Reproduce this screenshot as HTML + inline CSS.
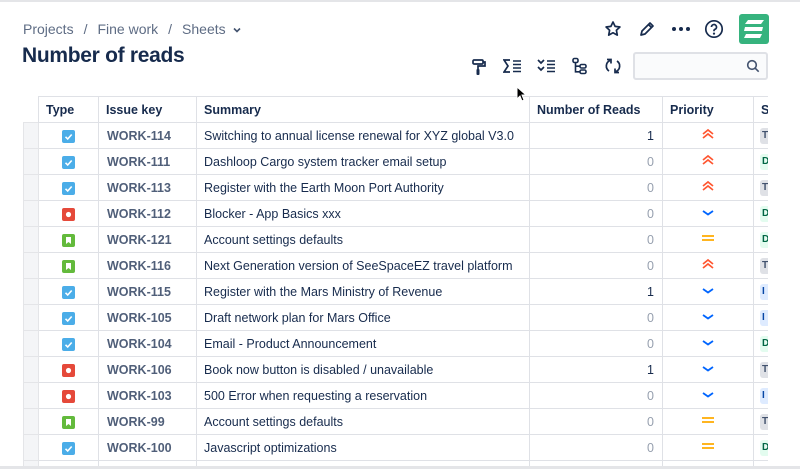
<!DOCTYPE html>
<html><head><meta charset="utf-8"><style>
*{margin:0;padding:0;box-sizing:border-box}
body{width:800px;height:469px;overflow:hidden;background:#fff;font-family:"Liberation Sans",sans-serif;color:#172b4d;position:relative}
.top{position:absolute;left:0;top:0;width:800px;height:2px;background:#e4e5e8}
.bc{position:absolute;left:23px;top:21px;font-size:14px;color:#5e6c84}
.bc span{margin:0 10px}
h1{position:absolute;left:22px;top:44px;font-size:21px;font-weight:bold;color:#172b4d;letter-spacing:-0.3px}
.ico{position:absolute}
.search{position:absolute;left:633px;top:52px;width:135px;height:28px;border:2px solid #dfe1e6;border-radius:3px;background:#fafbfc}
.wrap{position:absolute;left:23px;top:96px;width:745px;height:373px;overflow:hidden}
table{border-collapse:collapse;table-layout:fixed;width:770px;font-size:12.5px}
td,th{border:1px solid #dfe1e6;height:26px;white-space:nowrap;overflow:hidden}
th{text-align:left;font-weight:bold;padding-left:7px;color:#172b4d;font-size:12.5px}
th.g{border:none;border-right:1px solid #dfe1e6}
td.g{background:#f4f5f7;border-color:#e4e5e8}
td.t{text-align:center}
td.k{color:#505f79;padding-left:8px;font-weight:bold}
td.s{padding-left:7px}
td.n{text-align:right;padding-right:8px;color:#97a0af}
td.n.one{color:#172b4d}
td.p{text-align:center}
td.st{padding-left:6px}
.ty{display:inline-block;width:13px;height:13px;border-radius:2px;vertical-align:middle;position:relative}
.ty svg{position:absolute;left:0;top:0}
.task{background:#4bade8}
.bug{background:#e5493a}
.story{background:#63ba3c}
.tag{display:inline-block;width:14px;height:16px;border-radius:3px;font-size:10px;font-weight:bold;font-style:normal;line-height:16px;padding-left:2px;vertical-align:middle}
.T{background:#dfe1e6;color:#42526e}.D{background:#e3fcef;color:#006644}.I{background:#deebff;color:#0747a6}
.fade{position:absolute;left:768px;top:90px;width:32px;height:379px;background:#fff}
.bot{position:absolute;left:0;top:466px;width:800px;height:3px;background:#e4e5e8}
</style></head><body>
<div class="top"></div>
<div class="bc">Projects<span>/</span>Fine work<span>/</span>Sheets <svg width="10" height="8" viewBox="0 0 10 8" style="margin-left:2px"><path d="M2 2.5l3 3 3-3" stroke="#42526e" stroke-width="1.6" fill="none"/></svg></div>
<h1>Number of reads</h1>
<svg class="ico" style="left:604px;top:20px" width="18" height="18" viewBox="0 0 18 18"><path d="M9 2l2.1 4.4 4.8.6-3.5 3.3.9 4.8L9 12.8l-4.3 2.3.9-4.8L2.1 7l4.8-.6z" fill="none" stroke="#172b4d" stroke-width="1.7" stroke-linejoin="round"/></svg>
<svg class="ico" style="left:638px;top:20px" width="18" height="18" viewBox="0 0 18 18"><path d="M3 15l1-4 8-8 3 3-8 8z M10.5 4.5l3 3" fill="none" stroke="#172b4d" stroke-width="1.7" stroke-linejoin="round"/></svg>
<svg class="ico" style="left:671px;top:25px" width="20" height="8"><circle cx="3" cy="4" r="2" fill="#172b4d"/><circle cx="10" cy="4" r="2" fill="#172b4d"/><circle cx="17" cy="4" r="2" fill="#172b4d"/></svg>
<svg class="ico" style="left:704px;top:19px" width="20" height="20" viewBox="0 0 20 20"><circle cx="10" cy="10" r="8.2" fill="none" stroke="#172b4d" stroke-width="1.7"/><path d="M7.5 8a2.5 2.5 0 1 1 3.5 2.3c-.7.3-1 .8-1 1.5v.5" fill="none" stroke="#172b4d" stroke-width="1.7"/><circle cx="10" cy="14.6" r="1.1" fill="#172b4d"/></svg>
<svg class="ico" style="left:739px;top:14px" width="30" height="30" viewBox="0 0 30 30"><rect width="30" height="30" rx="3" fill="#36b37e"/><path d="M9 6h16l-3 4H6z M6 13h18l-1 4H5z M7 20h16l-2 4H5z" fill="#fff"/></svg>
<svg class="ico" style="left:471px;top:58px" width="16" height="18" viewBox="0 0 16 18"><rect x="2" y="2" width="10" height="4" rx="1" fill="none" stroke="#172b4d" stroke-width="1.7"/><path d="M12 4h2v4H7v3" fill="none" stroke="#172b4d" stroke-width="1.7"/><rect x="5.5" y="11" width="3" height="6" rx="1" fill="#172b4d"/></svg>
<svg class="ico" style="left:503px;top:58px" width="20" height="16" viewBox="0 0 20 16"><path d="M7 2H1l4 6-4 6h6" fill="none" stroke="#172b4d" stroke-width="1.7"/><path d="M10 3h8M10 6.5h8M10 10h8M10 13.5h8" stroke="#172b4d" stroke-width="1.5"/></svg>
<svg class="ico" style="left:537px;top:58px" width="20" height="16" viewBox="0 0 20 16"><path d="M1 2l3 3 3-3M1 9l3 3 3-3" fill="none" stroke="#172b4d" stroke-width="1.7"/><path d="M10 3h8M10 6.5h8M10 10h8M10 13.5h8" stroke="#172b4d" stroke-width="1.5"/></svg>
<svg class="ico" style="left:571px;top:57px" width="18" height="18" viewBox="0 0 18 18"><rect x="2" y="1.5" width="5" height="4" rx="1.5" fill="none" stroke="#172b4d" stroke-width="1.6"/><rect x="9" y="7.5" width="6" height="3.5" rx="1.5" fill="none" stroke="#172b4d" stroke-width="1.6"/><rect x="9" y="13" width="6" height="3.5" rx="1.5" fill="none" stroke="#172b4d" stroke-width="1.6"/><path d="M4.5 5.5v9.3H9M4.5 9.2H9" fill="none" stroke="#172b4d" stroke-width="1.6"/></svg>
<svg class="ico" style="left:604px;top:57px" width="18" height="18" viewBox="0 0 18 18"><path d="M6 3.5A6 6 0 0 0 5 14M12 14.5A6 6 0 0 0 13 4M3 2.5h4v4M15 15.5h-4v-4" fill="none" stroke="#172b4d" stroke-width="1.7"/></svg>
<div class="search"><svg style="position:absolute;right:6px;top:5px" width="14" height="14" viewBox="0 0 14 14"><circle cx="6" cy="6" r="4.3" fill="none" stroke="#42526e" stroke-width="1.6"/><path d="M9.2 9.2l3.5 3.5" stroke="#42526e" stroke-width="1.6"/></svg></div>
<svg width="0" height="0" style="position:absolute"><defs>
<g id="ck"><path d="M3.5 6.8l2.2 2.2 4-4.5" stroke="#fff" stroke-width="1.6" fill="none"/></g>
<g id="dt"><circle cx="6.5" cy="6.5" r="2.6" fill="#fff"/></g>
<g id="bm"><path d="M4 3h5v7l-2.5-2L4 10z" fill="#fff"/></g>
</defs></svg>
<div class="wrap"><table>
<colgroup><col style="width:15px"><col style="width:60px"><col style="width:98px"><col style="width:333px"><col style="width:133px"><col style="width:91px"><col style="width:40px"></colgroup>
<tr><th class="g"></th><th>Type</th><th>Issue key</th><th>Summary</th><th>Number of Reads</th><th>Priority</th><th>Status</th></tr>
<tr><td class="g"></td><td class="t"><i class="ty task"><svg width="13" height="13"><use href="#ck"/></svg></i></td><td class="k">WORK-114</td><td class="s">Switching to annual license renewal for XYZ global V3.0</td><td class="n one">1</td><td class="p"><svg width="14" height="12"><path d="M2 6l5-4 5 4M2 10l5-4 5 4" stroke="#ff5630" stroke-width="1.7" fill="none"/></svg></td><td class="st"><i class="tag T">T</i></td></tr>
<tr><td class="g"></td><td class="t"><i class="ty task"><svg width="13" height="13"><use href="#ck"/></svg></i></td><td class="k">WORK-111</td><td class="s">Dashloop Cargo system tracker email setup</td><td class="n">0</td><td class="p"><svg width="14" height="12"><path d="M2 6l5-4 5 4M2 10l5-4 5 4" stroke="#ff5630" stroke-width="1.7" fill="none"/></svg></td><td class="st"><i class="tag D">D</i></td></tr>
<tr><td class="g"></td><td class="t"><i class="ty task"><svg width="13" height="13"><use href="#ck"/></svg></i></td><td class="k">WORK-113</td><td class="s">Register with the Earth Moon Port Authority</td><td class="n">0</td><td class="p"><svg width="14" height="12"><path d="M2 6l5-4 5 4M2 10l5-4 5 4" stroke="#ff5630" stroke-width="1.7" fill="none"/></svg></td><td class="st"><i class="tag T">T</i></td></tr>
<tr><td class="g"></td><td class="t"><i class="ty bug"><svg width="13" height="13"><use href="#dt"/></svg></i></td><td class="k">WORK-112</td><td class="s">Blocker - App Basics xxx</td><td class="n">0</td><td class="p"><svg width="14" height="12"><path d="M2 5l5 3.5 5-3.5" stroke="#0065ff" stroke-width="1.8" fill="none"/></svg></td><td class="st"><i class="tag D">D</i></td></tr>
<tr><td class="g"></td><td class="t"><i class="ty story"><svg width="13" height="13"><use href="#bm"/></svg></i></td><td class="k">WORK-121</td><td class="s">Account settings defaults</td><td class="n">0</td><td class="p"><svg width="14" height="12"><path d="M1 4h12M1 8h12" stroke="#ffab00" stroke-width="1.8"/></svg></td><td class="st"><i class="tag D">D</i></td></tr>
<tr><td class="g"></td><td class="t"><i class="ty story"><svg width="13" height="13"><use href="#bm"/></svg></i></td><td class="k">WORK-116</td><td class="s">Next Generation version of SeeSpaceEZ travel platform</td><td class="n">0</td><td class="p"><svg width="14" height="12"><path d="M2 6l5-4 5 4M2 10l5-4 5 4" stroke="#ff5630" stroke-width="1.7" fill="none"/></svg></td><td class="st"><i class="tag T">T</i></td></tr>
<tr><td class="g"></td><td class="t"><i class="ty task"><svg width="13" height="13"><use href="#ck"/></svg></i></td><td class="k">WORK-115</td><td class="s">Register with the Mars Ministry of Revenue</td><td class="n one">1</td><td class="p"><svg width="14" height="12"><path d="M2 5l5 3.5 5-3.5" stroke="#0065ff" stroke-width="1.8" fill="none"/></svg></td><td class="st"><i class="tag I">I</i></td></tr>
<tr><td class="g"></td><td class="t"><i class="ty task"><svg width="13" height="13"><use href="#ck"/></svg></i></td><td class="k">WORK-105</td><td class="s">Draft network plan for Mars Office</td><td class="n">0</td><td class="p"><svg width="14" height="12"><path d="M2 5l5 3.5 5-3.5" stroke="#0065ff" stroke-width="1.8" fill="none"/></svg></td><td class="st"><i class="tag I">I</i></td></tr>
<tr><td class="g"></td><td class="t"><i class="ty task"><svg width="13" height="13"><use href="#ck"/></svg></i></td><td class="k">WORK-104</td><td class="s">Email - Product Announcement</td><td class="n">0</td><td class="p"><svg width="14" height="12"><path d="M2 5l5 3.5 5-3.5" stroke="#0065ff" stroke-width="1.8" fill="none"/></svg></td><td class="st"><i class="tag D">D</i></td></tr>
<tr><td class="g"></td><td class="t"><i class="ty bug"><svg width="13" height="13"><use href="#dt"/></svg></i></td><td class="k">WORK-106</td><td class="s">Book now button is disabled / unavailable</td><td class="n one">1</td><td class="p"><svg width="14" height="12"><path d="M2 5l5 3.5 5-3.5" stroke="#0065ff" stroke-width="1.8" fill="none"/></svg></td><td class="st"><i class="tag T">T</i></td></tr>
<tr><td class="g"></td><td class="t"><i class="ty bug"><svg width="13" height="13"><use href="#dt"/></svg></i></td><td class="k">WORK-103</td><td class="s">500 Error when requesting a reservation</td><td class="n">0</td><td class="p"><svg width="14" height="12"><path d="M2 5l5 3.5 5-3.5" stroke="#0065ff" stroke-width="1.8" fill="none"/></svg></td><td class="st"><i class="tag I">I</i></td></tr>
<tr><td class="g"></td><td class="t"><i class="ty story"><svg width="13" height="13"><use href="#bm"/></svg></i></td><td class="k">WORK-99</td><td class="s">Account settings defaults</td><td class="n">0</td><td class="p"><svg width="14" height="12"><path d="M1 4h12M1 8h12" stroke="#ffab00" stroke-width="1.8"/></svg></td><td class="st"><i class="tag T">T</i></td></tr>
<tr><td class="g"></td><td class="t"><i class="ty task"><svg width="13" height="13"><use href="#ck"/></svg></i></td><td class="k">WORK-100</td><td class="s">Javascript optimizations</td><td class="n">0</td><td class="p"><svg width="14" height="12"><path d="M1 4h12M1 8h12" stroke="#ffab00" stroke-width="1.8"/></svg></td><td class="st"><i class="tag D">D</i></td></tr>
<tr><td class="g"></td><td class="t"><i class="ty story"></i></td><td class="k"></td><td class="s"></td><td class="n"></td><td class="p"></td><td class="st"></td></tr>
</table></div>
<div class="fade"></div>
<svg class="ico" style="left:516px;top:86px" width="12" height="16" viewBox="0 0 12 16"><path d="M1 1v12l3-3 2 5 2-1-2-5h4z" fill="#000" stroke="#fff" stroke-width="1"/></svg>
<div class="bot"></div>
</body></html>
